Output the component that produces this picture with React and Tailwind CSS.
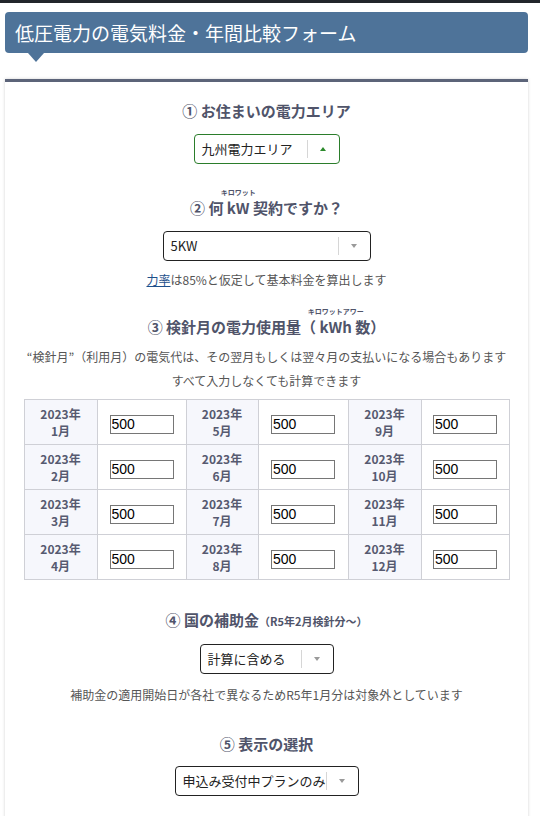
import React from 'react';

const FONT = { fontFamily: '"Noto Sans CJK JP", "Noto Sans", sans-serif' };

const MONTHS = [
  [1, 5, 9],
  [2, 6, 10],
  [3, 7, 11],
  [4, 8, 12],
];

const Heading = ({ children, className = '' }) => (
  <div className={`h-6 leading-6 text-[15px] font-bold text-[#50546a] text-center ${className}`}>
    {children}
  </div>
);

const Ruby = ({ base, text }) => (
  <span className="relative inline-block">
    <span className="absolute left-1/2 -translate-x-1/2 -top-[7px] text-[7px] leading-none whitespace-nowrap font-bold">
      {text}
    </span>
    {base}
  </span>
);

const Select = ({ label, width, active, className = '' }) => (
  <div
    className={`h-[30px] flex items-center bg-white rounded-[4px] border ${
      active ? 'border-[#2b7d2b]' : 'border-[#222]'
    } ${className}`}
    style={{ width }}
  >
    <span className="flex-1 pl-[7px] text-[13px] text-[#222] whitespace-nowrap overflow-hidden">{label}</span>
    <span className="w-px h-[18px] bg-[#d6d6d6]" />
    <span className="w-[31px] flex justify-center">
      {active ? (
        <span className="w-0 h-0 border-x-[3.5px] border-x-transparent border-b-[4px] border-b-[#2b8a2b]" />
      ) : (
        <span className="w-0 h-0 border-x-[3.5px] border-x-transparent border-t-[4px] border-t-[#9a9a9a]" />
      )}
    </span>
  </div>
);

const Note = ({ children, className = '' }) => (
  <div className={`h-6 leading-6 text-[12px] text-[#555] text-center ${className}`}>{children}</div>
);

export default function App() {
  return (
    <div className="min-h-[816px] bg-white" style={FONT}>
      <div className="h-[3px] bg-[#22262b]" />

      {/* title */}
      <div className="ml-[5px] mr-[12px] mt-[9px] relative">
        <div className="h-[41px] rounded-[4px] bg-[#4e7399] pl-[10px] flex items-center">
          <span className="text-[19px] text-white leading-none">低圧電力の電気料金・年間比較フォーム</span>
        </div>
        <span className="absolute left-[23px] top-[41px] w-0 h-0 border-x-[8px] border-x-transparent border-t-[9px] border-t-[#4e7399]" />
      </div>

      {/* card */}
      <div className="ml-[5px] mr-[12px] mt-[26px] border-t-[3px] border-[#5c6479] bg-white shadow-[0_0_3px_rgba(0,0,0,0.18)] pt-[17px] pb-10 px-[19px] flex flex-col items-center">
        <Heading>① お住まいの電力エリア</Heading>
        <Select label="九州電力エリア" width={146} active className="mt-[11px]" />

        <Heading className="mt-[32px]">
          ② 何 <Ruby base="kW" text="キロワット" /> 契約ですか？
        </Heading>
        <Select label="5KW" width={208} className="mt-[11px]" />
        <Note className="mt-[7px]">
          <span className="text-[#1d4f8a] underline">力率</span>は85%と仮定して基本料金を算出します
        </Note>

        <Heading className="mt-[23px]">
          ③ 検針月の電力使用量（ <Ruby base="kWh" text="キロワットアワー" /> 数）
        </Heading>
        <div className="mt-[6px] text-[12px] leading-6 text-[#555] text-center">
          “検針月”（利用月）の電気代は、その翌月もしくは翌々月の支払いになる場合もあります
          <br />
          すべて入力しなくても計算できます
        </div>

        <table className="mt-[6px] w-[485px] border-collapse table-fixed">
          <colgroup>
            <col className="w-[73px]" />
            <col className="w-[89px]" />
            <col className="w-[72px]" />
            <col className="w-[90px]" />
            <col className="w-[73px]" />
            <col className="w-[88px]" />
          </colgroup>
          <tbody>
            {MONTHS.map((row, i) => (
              <tr key={i} className="h-[45px]">
                {row.map((m) => (
                  <React.Fragment key={m}>
                    <td className="border border-[#cfd0d6] bg-[#f6f7fc] text-center text-[12px] font-bold leading-[17px] text-[#565a70]">
                      2023年
                      <br />
                      {m}月
                    </td>
                    <td className="border border-[#cfd0d6] text-center">
                      <input
                        readOnly
                        value="500"
                        className="w-[64px] h-[19px] border border-[#767676] px-[1px] text-[14px] text-black align-middle"
                        style={{ fontFamily: '"Liberation Sans", Arial, sans-serif' }}
                      />
                    </td>
                  </React.Fragment>
                ))}
              </tr>
            ))}
          </tbody>
        </table>

        <Heading className="mt-[28px]">
          ④ 国の補助金<span className="text-[11px]">（R5年2月検針分〜）</span>
        </Heading>
        <Select label="計算に含める" width={134} className="mt-[12px]" />
        <Note className="mt-[9px]">補助金の適用開始日が各社で異なるためR5年1月分は対象外としています</Note>

        <Heading className="mt-[25px]">⑤ 表示の選択</Heading>
        <Select label="申込み受付中プランのみ" width={184} className="mt-[10px]" />
      </div>
    </div>
  );
}
